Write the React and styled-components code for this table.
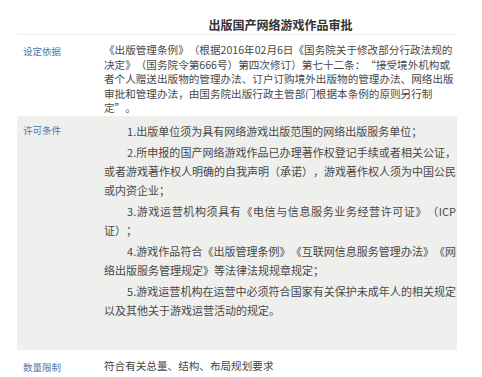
import styled, { createGlobalStyle } from 'styled-components';

// Shaded row keeps the original's line breaks; plain rows wrap on their own.
const rows = [
  {
    label: '设定依据',
    items: [
      '《出版管理条例》（根据2016年02月6日《国务院关于修改部分行政法规的决定》（国务院令第666号）第四次修订）第七十二条：“接受境外机构或者个人赠送出版物的管理办法、订户订购境外出版物的管理办法、网络出版审批和管理办法，由国务院出版行政主管部门根据本条例的原则另行制定”。',
    ],
  },
  {
    label: '许可条件',
    shaded: true,
    items: [
      ['1.出版单位须为具有网络游戏出版范围的网络出版服务单位；'],
      [
        '2.所申报的国产网络游戏作品已办理著作权登记手续或者相关公证，',
        '或者游戏著作权人明确的自我声明（承诺），游戏著作权人须为中国公民',
        '或内资企业；',
      ],
      ['3.游戏运营机构须具有《电信与信息服务业务经营许可证》（ICP', '证）；'],
      [
        '4.游戏作品符合《出版管理条例》《互联网信息服务管理办法》《网',
        '络出版服务管理规定》等法律法规规章规定；',
      ],
      [
        '5.游戏运营机构在运营中必须符合国家有关保护未成年人的相关规定',
        '以及其他关于游戏运营活动的规定。',
      ],
    ],
  },
  {
    label: '数量限制',
    items: ['符合有关总量、结构、布局规划要求'],
  },
];

export default function App() {
  return (
    <>
      <GlobalStyle />
      <StyledSheet>
        <StyledTitleRow>
          <span />
          <StyledTitle>出版国产网络游戏作品审批</StyledTitle>
        </StyledTitleRow>
        {rows.map((row) => (
          <StyledRow key={row.label} $shaded={row.shaded}>
            <StyledLabel>{row.label}</StyledLabel>
            <StyledValue $shaded={row.shaded}>
              {row.items.map((item, i) =>
                Array.isArray(item) ? (
                  <StyledPara key={i}>
                    {item.map((line, j) => (
                      <StyledLine
                        key={line}
                        $first={j === 0}
                        $last={j === item.length - 1}
                      >
                        {line}
                      </StyledLine>
                    ))}
                  </StyledPara>
                ) : (
                  <StyledPlain key={i}>{item}</StyledPlain>
                )
              )}
            </StyledValue>
          </StyledRow>
        ))}
      </StyledSheet>
    </>
  );
}

const GlobalStyle = createGlobalStyle`
  body {
    margin: 0;
    background: #fff;
    font-family: "Noto Sans CJK SC", "Noto Sans", sans-serif;
    text-spacing-trim: space-all;
  }
`;

const StyledSheet = styled.div`
  width: 440px;
  margin-left: 17px;
`;

const StyledTitleRow = styled.div`
  display: grid;
  grid-template-columns: 87px 1fr;
  height: 34px;
  align-items: center;
  border-bottom: 1px solid #eeeeee;
`;

const StyledTitle = styled.h1`
  margin: 0;
  padding-top: 14px;
  text-align: center;
  font-size: 12px;
  font-weight: 700;
  color: #333;
`;

const StyledRow = styled.div`
  display: grid;
  grid-template-columns: 87px 1fr;
  background: ${(p) => (p.$shaded ? '#eff0ee' : 'transparent')};
  padding: ${(p) => (p.$shaded ? '6px 0 28px' : '8px 0 0')};
  margin-bottom: ${(p) => (p.$shaded ? '1px' : '0')};
`;

const StyledLabel = styled.div`
  padding-left: 6px;
  padding-top: 1px;
  font-size: 9.5px;
  line-height: 14px;
  color: #4b78b0;
`;

const StyledValue = styled.div`
  font-size: ${(p) => (p.$shaded ? '11px' : '10.6px')};
  line-height: ${(p) => (p.$shaded ? '19px' : '14.5px')};
  color: #484848;
  padding-right: ${(p) => (p.$shaded ? '5px' : '2px')};
`;

const StyledPlain = styled.p`
  margin: 0;
`;

const StyledPara = styled.p`
  margin: 0 0 2px;
`;

const StyledLine = styled.span`
  display: block;
  white-space: nowrap;
  text-indent: ${(p) => (p.$first ? '2.1em' : '0')};
  text-align: justify;
  text-align-last: ${(p) => (p.$last ? 'auto' : 'justify')};
`;
